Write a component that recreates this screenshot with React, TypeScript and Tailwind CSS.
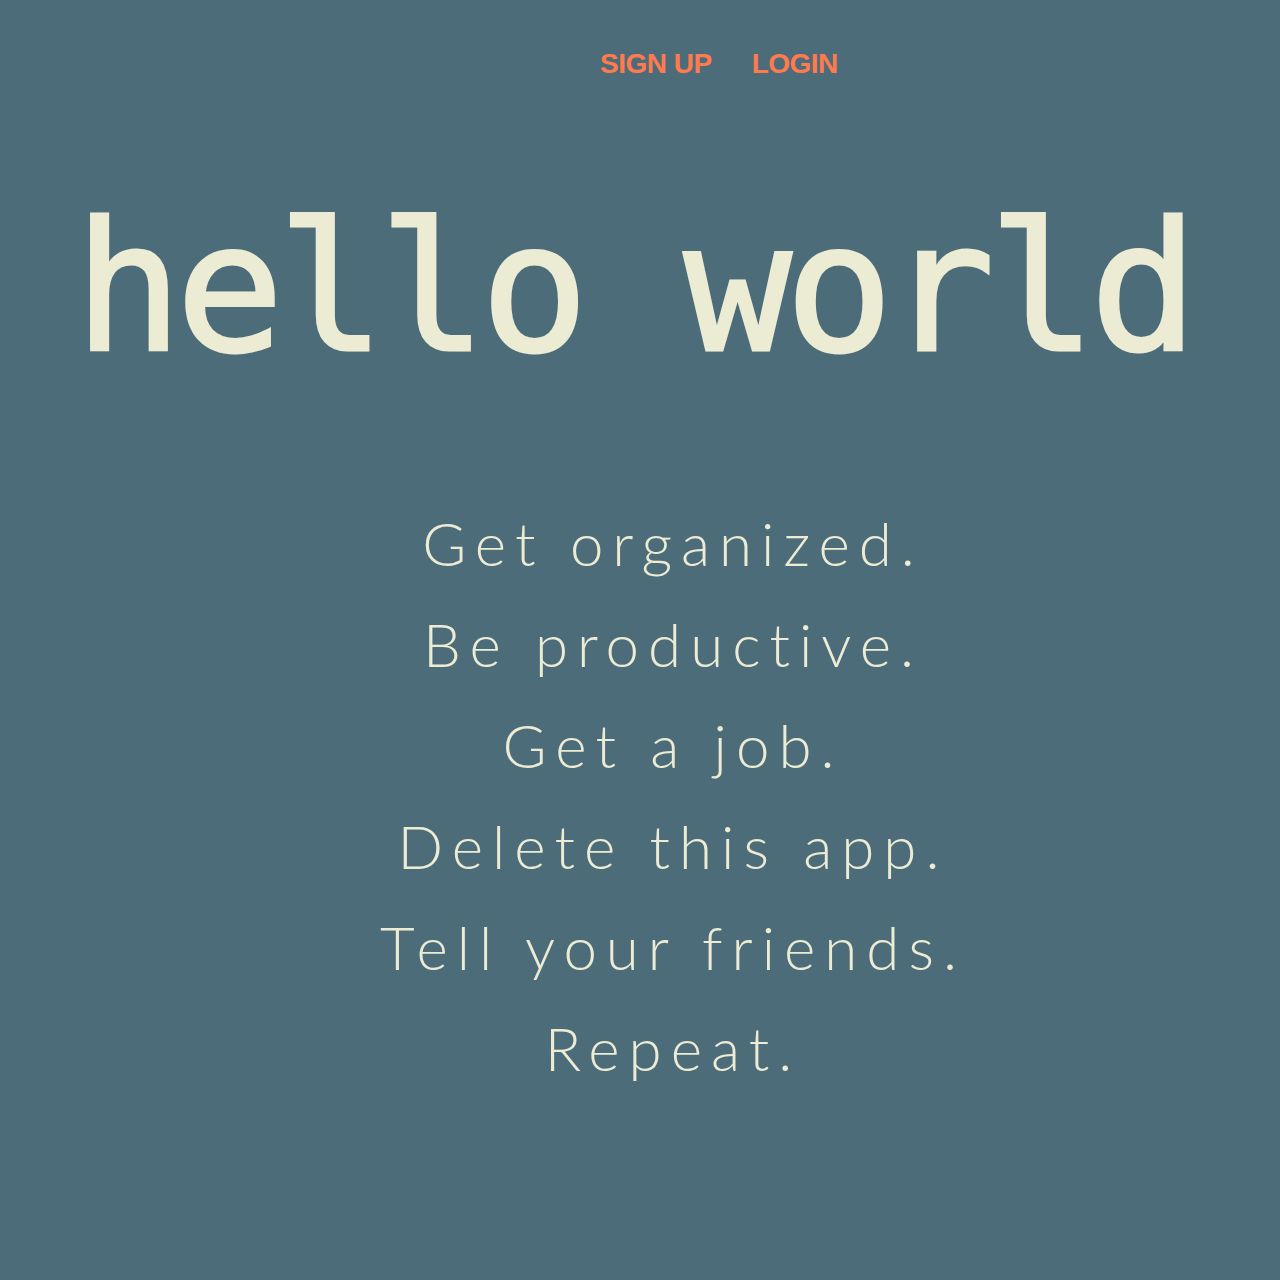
import React from 'react';

const lines = [
  'Get organized.',
  'Be productive.',
  'Get a job.',
  'Delete this app.',
  'Tell your friends.',
  'Repeat.',
];

const App = () => {
  return (
    <div className="min-h-screen bg-[#4d6c7a]">
      <nav className="flex pl-[600px] pt-[43px] gap-[40px] font-['Liberation_Sans',Arial,sans-serif] font-bold text-[28px] text-[#ff7a4d] tracking-[-0.5px]">
        <a href="#">SIGN UP</a>
        <a href="#">LOGIN</a>
      </nav>
      <h1 className="mt-[114px] pr-[14px] text-center font-['DejaVu_Sans_Mono',monospace] font-normal text-[179px] leading-none tracking-[-6.2px] text-[#ecebd3] [-webkit-text-stroke:3px_#ecebd3]">
        hello world
      </h1>
      <div className="mt-[115px] pl-[66px] flex flex-col items-center font-['Lato',sans-serif] font-light text-[60px] leading-[101px] tracking-[0.15em] text-[#ecebd3]">
        {lines.map((line) => (
          <p key={line}>{line}</p>
        ))}
      </div>
    </div>
  );
};

export default App;
